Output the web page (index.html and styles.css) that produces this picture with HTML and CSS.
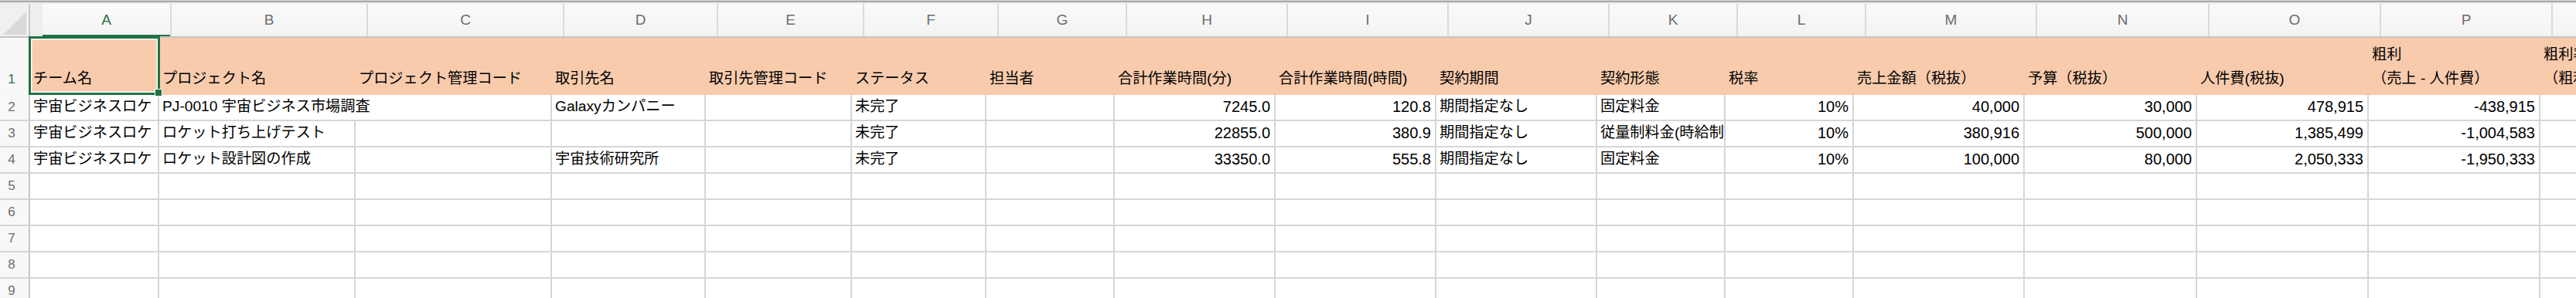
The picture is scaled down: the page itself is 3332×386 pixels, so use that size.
FILE: index.html
```html
<!DOCTYPE html>
<html lang="ja">
<head>
<meta charset="utf-8">
<title>プロジェクト一覧</title>
<link rel="stylesheet" href="styles.css">
</head>
<body>
<div class="sheet">
  <div class="topbar"></div>
  <div class="colheads">
    <div class="corner"><svg class="corner-tri" width="37" height="42" viewBox="0 0 37 42"><polygon points="4,40 34,10 34,40" fill="#d9d9d9"/></svg></div>
    <div class="colhead-gap"></div>
    <div class="colhead sel">A</div>
    <div class="colhead">B</div>
    <div class="colhead">C</div>
    <div class="colhead">D</div>
    <div class="colhead">E</div>
    <div class="colhead">F</div>
    <div class="colhead">G</div>
    <div class="colhead">H</div>
    <div class="colhead">I</div>
    <div class="colhead">J</div>
    <div class="colhead">K</div>
    <div class="colhead">L</div>
    <div class="colhead">M</div>
    <div class="colhead">N</div>
    <div class="colhead">O</div>
    <div class="colhead">P</div>
    <div class="colhead">Q</div>
  </div>

  <div class="row row-title">
    <div class="rownum sel">1</div>
    <div class="th"><div>チーム名</div></div>
    <div class="th"><div>プロジェクト名</div></div>
    <div class="th"><div>プロジェクト管理コード</div></div>
    <div class="th"><div>取引先名</div></div>
    <div class="th"><div>取引先管理コード</div></div>
    <div class="th"><div>ステータス</div></div>
    <div class="th"><div>担当者</div></div>
    <div class="th"><div>合計作業時間(分)</div></div>
    <div class="th"><div>合計作業時間(時間)</div></div>
    <div class="th"><div>契約期間</div></div>
    <div class="th"><div>契約形態</div></div>
    <div class="th"><div>税率</div></div>
    <div class="th"><div>売上金額（税抜）</div></div>
    <div class="th"><div>予算（税抜）</div></div>
    <div class="th"><div>人件費(税抜)</div></div>
    <div class="th"><div>粗利</div><div>（売上 - 人件費）</div></div>
    <div class="th"><div>粗利率</div><div>（粗利）</div></div>
  </div>

  <div class="row">
    <div class="rownum">2</div>
    <div class="cell">宇宙ビジネスロケ</div>
    <div class="cell span2">PJ-0010 宇宙ビジネス市場調査</div>
    <div class="cell">Galaxyカンパニー</div>
    <div class="cell"></div>
    <div class="cell">未完了</div>
    <div class="cell"></div>
    <div class="cell num">7245.0</div>
    <div class="cell num">120.8</div>
    <div class="cell">期間指定なし</div>
    <div class="cell">固定料金</div>
    <div class="cell num">10%</div>
    <div class="cell num">40,000</div>
    <div class="cell num">30,000</div>
    <div class="cell num">478,915</div>
    <div class="cell num">-438,915</div>
    <div class="cell"></div>
  </div>

  <div class="row">
    <div class="rownum">3</div>
    <div class="cell">宇宙ビジネスロケ</div>
    <div class="cell">ロケット打ち上げテスト</div>
    <div class="cell"></div>
    <div class="cell"></div>
    <div class="cell"></div>
    <div class="cell">未完了</div>
    <div class="cell"></div>
    <div class="cell num">22855.0</div>
    <div class="cell num">380.9</div>
    <div class="cell">期間指定なし</div>
    <div class="cell">従量制料金(時給制</div>
    <div class="cell num">10%</div>
    <div class="cell num">380,916</div>
    <div class="cell num">500,000</div>
    <div class="cell num">1,385,499</div>
    <div class="cell num">-1,004,583</div>
    <div class="cell"></div>
  </div>

  <div class="row">
    <div class="rownum">4</div>
    <div class="cell">宇宙ビジネスロケ</div>
    <div class="cell">ロケット設計図の作成</div>
    <div class="cell"></div>
    <div class="cell">宇宙技術研究所</div>
    <div class="cell"></div>
    <div class="cell">未完了</div>
    <div class="cell"></div>
    <div class="cell num">33350.0</div>
    <div class="cell num">555.8</div>
    <div class="cell">期間指定なし</div>
    <div class="cell">固定料金</div>
    <div class="cell num">10%</div>
    <div class="cell num">100,000</div>
    <div class="cell num">80,000</div>
    <div class="cell num">2,050,333</div>
    <div class="cell num">-1,950,333</div>
    <div class="cell"></div>
  </div>

  <div class="row">
    <div class="rownum">5</div>
    <div class="cell"></div><div class="cell"></div><div class="cell"></div><div class="cell"></div><div class="cell"></div><div class="cell"></div><div class="cell"></div><div class="cell"></div><div class="cell"></div><div class="cell"></div><div class="cell"></div><div class="cell"></div><div class="cell"></div><div class="cell"></div><div class="cell"></div><div class="cell"></div><div class="cell"></div>
  </div>
  <div class="row">
    <div class="rownum">6</div>
    <div class="cell"></div><div class="cell"></div><div class="cell"></div><div class="cell"></div><div class="cell"></div><div class="cell"></div><div class="cell"></div><div class="cell"></div><div class="cell"></div><div class="cell"></div><div class="cell"></div><div class="cell"></div><div class="cell"></div><div class="cell"></div><div class="cell"></div><div class="cell"></div><div class="cell"></div>
  </div>
  <div class="row">
    <div class="rownum">7</div>
    <div class="cell"></div><div class="cell"></div><div class="cell"></div><div class="cell"></div><div class="cell"></div><div class="cell"></div><div class="cell"></div><div class="cell"></div><div class="cell"></div><div class="cell"></div><div class="cell"></div><div class="cell"></div><div class="cell"></div><div class="cell"></div><div class="cell"></div><div class="cell"></div><div class="cell"></div>
  </div>
  <div class="row">
    <div class="rownum">8</div>
    <div class="cell"></div><div class="cell"></div><div class="cell"></div><div class="cell"></div><div class="cell"></div><div class="cell"></div><div class="cell"></div><div class="cell"></div><div class="cell"></div><div class="cell"></div><div class="cell"></div><div class="cell"></div><div class="cell"></div><div class="cell"></div><div class="cell"></div><div class="cell"></div><div class="cell"></div>
  </div>
  <div class="row">
    <div class="rownum">9</div>
    <div class="cell"></div><div class="cell"></div><div class="cell"></div><div class="cell"></div><div class="cell"></div><div class="cell"></div><div class="cell"></div><div class="cell"></div><div class="cell"></div><div class="cell"></div><div class="cell"></div><div class="cell"></div><div class="cell"></div><div class="cell"></div><div class="cell"></div><div class="cell"></div><div class="cell"></div>
  </div>

  <div class="selection"><div class="handle"></div></div>
</div>
</body>
</html>
```

FILE: styles.css
```css
html, body {
  margin: 0;
  padding: 0;
  background: #ffffff;
}

.sheet {
  position: relative;
  width: 3332px;
  height: 386px;
  overflow: hidden;
  font-family: "Liberation Sans", "Noto Sans CJK JP", sans-serif;
  color: #000;
}

.topbar {
  height: 5px;
  background: linear-gradient(#d6d6d6 0 1px, #a8a8a8 1px 3px, #ebebeb 3px 5px);
}

.colheads {
  display: grid;
  grid-template-columns: 39px 16px 167px 254px 254px 199px 189px 174px 166px 208px 208px 208px 166px 166px 221px 223px 222px 222px 200px;
  height: 44px;
  box-sizing: border-box;
  border-bottom: 2px solid #c4c4c4;
  background: #f5f5f5;
}

.corner {
  background: #f0f0f0;
  border-right: 2px solid #c8c8c8;
  box-sizing: border-box;
  overflow: hidden;
}

.corner-tri {
  display: block;
}

.colhead-gap {
  background: #eeeeee;
}

.colhead {
  box-sizing: border-box;
  border-right: 2px solid #dadada;
  background: linear-gradient(#fafafa, #f3f3f3);
  color: #6d6d6d;
  font-size: 19px;
  line-height: 42px;
  text-align: center;
}

.colhead.sel {
  color: #1f7244;
  background: linear-gradient(#fbfbfb, #f4f4f4);
  box-shadow: inset 0 -2px 0 #1f7244;
}

.row {
  display: grid;
  grid-template-columns: 39px 167px 254px 254px 199px 189px 174px 166px 208px 208px 208px 166px 166px 221px 223px 222px 222px 200px;
  height: 34px;
}

.rownum {
  box-sizing: border-box;
  border-right: 2px solid #c8c8c8;
  border-bottom: 2px solid #d6d6d6;
  background: #f8f8f8;
  color: #6d6d6d;
  font-size: 17px;
  line-height: 32px;
  text-align: center;
  padding-right: 7px;
}

.rownum.sel {
  color: #1f7244;
}

.cell {
  box-sizing: border-box;
  border-right: 2px solid #d6d6d6;
  border-bottom: 2px solid #d6d6d6;
  padding: 0 4px;
  font-size: 19.2px;
  line-height: 30px;
  white-space: nowrap;
  overflow: hidden;
}

.cell.span2 {
  grid-column: span 2;
}

.cell.num {
  text-align: right;
  padding-right: 5px;
  font-size: 20px;
}

.row-title {
  height: 74px;
  background: #f8cbad;
}

.row-title .rownum {
  display: flex;
  align-items: flex-end;
  justify-content: center;
  padding-bottom: 8px;
  line-height: 24px;
  border-bottom: none;
}

.th {
  display: flex;
  flex-direction: column;
  justify-content: flex-end;
  padding: 0 4px 6px;
  font-size: 19.2px;
  line-height: 31px;
  white-space: nowrap;
  overflow: hidden;
}

.selection {
  position: absolute;
  left: 37px;
  top: 47px;
  width: 170px;
  height: 76px;
  box-sizing: border-box;
  border: 3px solid #1f7244;
  box-shadow: inset 0 0 0 1.5px #ffffff;
}

.handle {
  position: absolute;
  right: -6px;
  bottom: -5px;
  width: 8px;
  height: 8px;
  background: #1f7244;
  border: 1px solid #ffffff;
}
```
